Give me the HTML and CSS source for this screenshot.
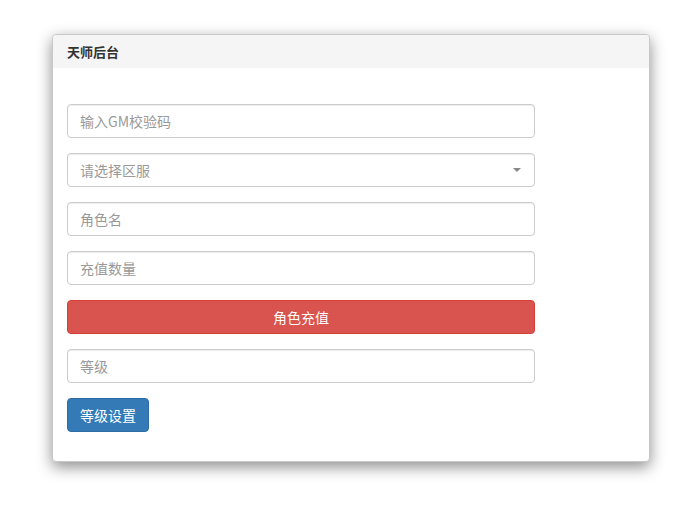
FILE: index.html
```html
<!DOCTYPE html>
<html>
<head>
<meta charset="utf-8">
<link rel="stylesheet" href="styles.css">
</head>
<body>
<div class="panel">
  <div class="panel-heading">天师后台</div>
  <div class="panel-body">
    <div class="field"><input class="control" placeholder="输入GM校验码"></div>
    <div class="field select-wrap">
      <div class="control select"><span class="ph">请选择区服</span><span class="caret"></span></div>
    </div>
    <div class="field"><input class="control" placeholder="角色名"></div>
    <div class="field"><input class="control" placeholder="充值数量"></div>
    <div class="field"><button class="btn btn-danger">角色充值</button></div>
    <div class="field"><input class="control" placeholder="等级"></div>
    <div class="field"><button class="btn btn-primary">等级设置</button></div>
  </div>
</div>
</body>
</html>
```
FILE: styles.css
```css
html, body {
  margin: 0;
  background: #fff;
}
body {
  box-sizing: border-box;
  min-height: 509px;
  padding: 34px 0 47px 52px;
  font-family: "Noto Sans CJK SC", "Liberation Sans", sans-serif;
  font-size: 14px;
  color: #333;
}
.panel {
  width: 596px;
  border: 1px solid #c8c8c8;
  border-radius: 4px;
  background: #fff;
  box-shadow: 0 5px 15px rgba(0,0,0,0.45);
}
.panel-heading {
  height: 33px;
  box-sizing: border-box;
  padding: 0 14px;
  display: flex;
  align-items: center;
  background: #f5f5f5;
  font-size: 13px;
  font-weight: bold;
  color: #333;
  border-radius: 4px 4px 0 0;
}
.panel-body {
  padding: 36px 14px 29px;
  display: flex;
  flex-direction: column;
  gap: 15px;
}
.field {
  width: 468px;
}
.control {
  display: block;
  box-sizing: border-box;
  width: 468px;
  height: 34px;
  margin: 0;
  padding: 0 12px;
  border: 1px solid #ccc;
  border-radius: 4px;
  font-family: inherit;
  font-size: 14px;
  color: #555;
  background: #fff;
  box-shadow: inset 0 1px 1px rgba(0,0,0,0.075);
  outline: none;
}
.control::placeholder {
  color: #999;
}
.select {
  display: flex;
  align-items: center;
  justify-content: space-between;
  padding-right: 13px;
}
.ph {
  color: #999;
}
.caret {
  width: 0;
  height: 0;
  border-left: 4px solid transparent;
  border-right: 4px solid transparent;
  border-top: 4px solid #888;
}
.btn {
  display: flex;
  align-items: center;
  justify-content: center;
  box-sizing: border-box;
  height: 34px;
  padding: 0 12px;
  border-radius: 4px;
  font-family: inherit;
  font-size: 14px;
  color: #fff;
  cursor: pointer;
}
.btn-danger {
  width: 468px;
  background: #d9534f;
  border: 1px solid #d43f3a;
}
.btn-primary {
  width: 82px;
  background: #337ab7;
  border: 1px solid #2e6da4;
}
```
